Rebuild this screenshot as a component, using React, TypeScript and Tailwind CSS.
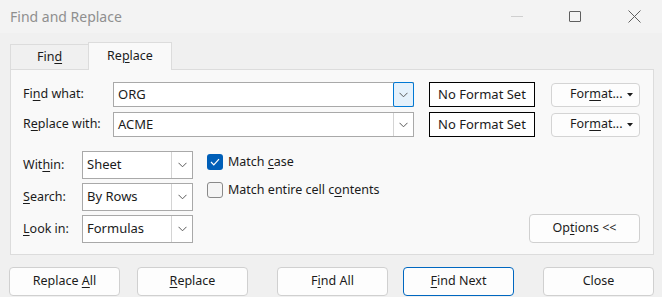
const font = { fontFamily: '"Noto Sans", "Open Sans", sans-serif' };

function Chevron() {
  return (
    <svg width="9" height="6" viewBox="0 0 9 6" fill="none">
      <path d="M0.5 0.8 L4.5 4.8 L8.5 0.8" stroke="#5a5a5a" strokeWidth="1" />
    </svg>
  );
}

function U({ children }: { children: string }) {
  return <span className="underline underline-offset-[2px]">{children}</span>;
}

function ComboInput({ value, focused }: { value: string; focused?: boolean }) {
  return (
    <div className="flex h-[25px] w-[301px] items-stretch border border-[#a9a9a9] bg-white">
      <div className="flex flex-1 items-center pl-[4px] text-[13px] text-[#1b1b1b]">{value}</div>
      <div
        className={
          focused
            ? 'my-[-1px] mr-[-1px] flex w-[21px] items-center justify-center rounded-[2px] border border-[#0078d4] bg-[#e5f1fb]'
            : 'flex w-[20px] items-center justify-center border-l border-[#d4d4d4] bg-white'
        }
      >
        <Chevron />
      </div>
    </div>
  );
}

function FormatBox() {
  return (
    <div className="flex h-[25px] w-[106px] items-center justify-center border border-black bg-white text-[13px] text-[#1b1b1b]">
      <span>No Format Set</span>
    </div>
  );
}

function FormatButton() {
  return (
    <div className="flex h-[24px] w-[89px] items-center whitespace-nowrap rounded-[4px] border border-[#d4d4d4] bg-[#fdfdfd] text-[#1b1b1b]">
      <span className="ml-[18px]">
        For<U>m</U>at...
      </span>
      <svg className="ml-auto mr-[6px]" width="6" height="4" viewBox="0 0 6 4">
        <path d="M0 0 L6 0 L3 3.5 Z" fill="#1b1b1b" />
      </svg>
    </div>
  );
}

function Select({ value }: { value: string }) {
  return (
    <div className="flex h-[28px] w-[111px] items-stretch border border-[#a9a9a9] bg-white">
      <div className="flex flex-1 items-center pl-[4px] text-[13px] text-[#1b1b1b]">{value}</div>
      <div className="flex w-[21px] items-center justify-center border-l border-[#d4d4d4]">
        <Chevron />
      </div>
    </div>
  );
}

function Btn({ children, primary, className = '' }: { children: React.ReactNode; primary?: boolean; className?: string }) {
  return (
    <div
      className={
        'flex h-[29px] w-[111px] items-center justify-center rounded-[4px] border bg-[#fdfdfd] text-[#1b1b1b] ' +
        (primary ? 'border-[#0067c0] ' : 'border-[#d0d0d0] ') +
        className
      }
    >
      <span className="whitespace-pre">{children}</span>
    </div>
  );
}

export default function App() {
  return (
    <div className="h-[297px] w-[662px] overflow-hidden bg-[#f0f0f0] text-[12.5px]" style={font}>
      {/* Title bar */}
      <div className="flex h-[33px] items-center bg-[#f3f3f3]">
        <span className="ml-[10px] text-[14px] text-[#8f8f8f]">Find and Replace</span>
        <div className="ml-auto flex items-center">
          <div className="mr-[46px] h-px w-[12px] bg-[#cfcfcf]" />
          <div className="mr-[47px] h-[11px] w-[12px] rounded-[1px] border border-[#5f5f5f]" />
          <svg className="mr-[21px]" width="13" height="13" viewBox="0 0 13 13">
            <path d="M0.5 0.5 L12.5 12.5 M12.5 0.5 L0.5 12.5" stroke="#5f5f5f" strokeWidth="1" />
          </svg>
        </div>
      </div>

      {/* Tabs */}
      <div className="mt-[9px] flex items-end pl-[10px]">
        <div className="flex h-[25px] w-[78px] items-center justify-center border border-b-0 border-r-0 border-[#dcdcdc] bg-[#f0f0f0] text-[#1b1b1b]">
          <span>
            Fin<U>d</U>
          </span>
        </div>
        <div className="relative z-10 mb-[-1px] flex h-[28px] w-[84px] items-center justify-center border border-b-0 border-[#dcdcdc] bg-[#f9f9f9] pb-[1px] text-[#1b1b1b]">
          <span>
            Re<U>p</U>lace
          </span>
        </div>
      </div>

      {/* Panel */}
      <div className="ml-[10px] h-[186px] w-[644px] border border-[#dcdcdc] bg-[#f9f9f9] text-[#1b1b1b]">
        <div className="flex flex-col gap-[5px] pl-[12px] pt-[12px]">
          <div className="flex items-center">
            <span className="w-[90px]">
              Fi<U>n</U>d what:
            </span>
            <ComboInput value="ORG" focused />
            <div className="ml-[15px]">
              <FormatBox />
            </div>
            <div className="ml-[16px]">
              <FormatButton />
            </div>
          </div>
          <div className="flex items-center">
            <span className="w-[90px]">
              R<U>e</U>place with:
            </span>
            <ComboInput value="ACME" />
            <div className="ml-[15px]">
              <FormatBox />
            </div>
            <div className="ml-[16px]">
              <FormatButton />
            </div>
          </div>
        </div>

        <div className="mt-[14px] flex pl-[12px]">
          <div className="flex flex-col gap-[4px]">
            <div className="flex items-center">
              <span className="w-[59px]">
                Wit<U>h</U>in:
              </span>
              <Select value="Sheet" />
            </div>
            <div className="flex items-center">
              <span className="w-[59px]">
                <U>S</U>earch:
              </span>
              <Select value="By Rows" />
            </div>
            <div className="flex items-center">
              <span className="w-[59px]">
                <U>L</U>ook in:
              </span>
              <Select value="Formulas" />
            </div>
          </div>

          <div className="ml-[14px] mt-[2px] flex flex-col gap-[9px]">
            <div className="flex items-center gap-[5px]">
              <div className="flex h-[16px] w-[16px] items-center justify-center rounded-[3px] bg-[#005fb8]">
                <svg width="10" height="8" viewBox="0 0 10 8" fill="none">
                  <path d="M1 4 L3.8 6.8 L9 1.2" stroke="white" strokeWidth="1.2" />
                </svg>
              </div>
              <span>
                Match <U>c</U>ase
              </span>
            </div>
            <div className="flex items-center gap-[5px]">
              <div className="h-[16px] w-[16px] rounded-[3px] border border-[#8a8a8a] bg-[#f5f5f5]" />
              <span>
                Match entire cell c<U>o</U>ntents
              </span>
            </div>
          </div>

          <div className="ml-auto mr-[13px] flex items-end">
            <div className="flex h-[29px] w-[111px] items-center justify-center rounded-[4px] border border-[#d0d0d0] bg-[#fdfdfd]">
              <span className="whitespace-pre">
                Op<U>t</U>ions &lt;&lt;
              </span>
            </div>
          </div>
        </div>
      </div>

      {/* Bottom buttons */}
      <div className="mt-[12px] flex pl-[9px]">
        <Btn>
          Replace <U>A</U>ll
        </Btn>
        <Btn className="ml-[17px]">
          <U>R</U>eplace
        </Btn>
        <Btn className="ml-[29px]">
          F<U>i</U>nd All
        </Btn>
        <Btn primary className="ml-[15px]">
          <U>F</U>ind Next
        </Btn>
        <Btn className="ml-[29px]">Close</Btn>
      </div>
    </div>
  );
}
